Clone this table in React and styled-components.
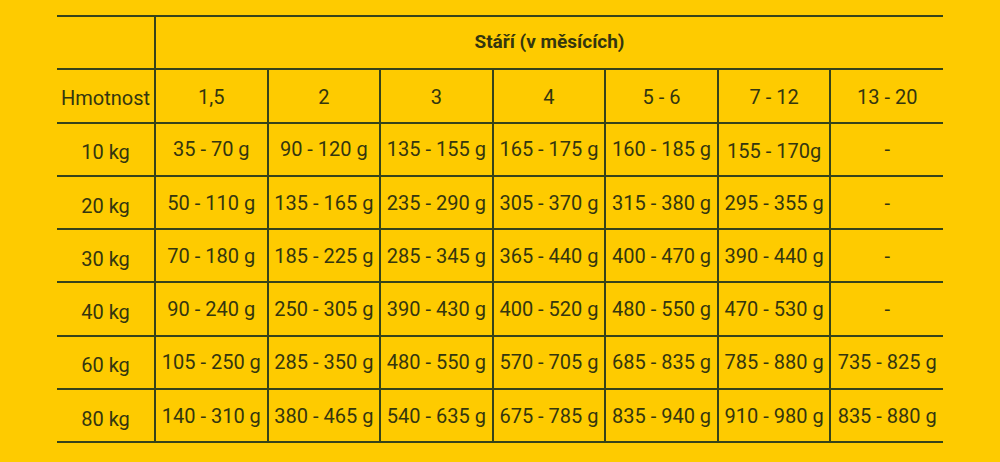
import React from "react";
import styled, { createGlobalStyle } from "styled-components";

const Global = createGlobalStyle`
  html, body { margin: 0; padding: 0; background: #fecb00; }
  body { font-family: Roboto, "Noto Sans", Arial, sans-serif; }
`;

const Page = styled.div`
  width: 1000px;
  height: 462px;
  background: #fecb00;
  padding: 15px 0 0 57px;
  box-sizing: border-box;
`;

const Table = styled.table`
  border-collapse: collapse;
  table-layout: fixed;
  width: 886px;
  color: #34360f;
  font-size: 20px;
`;

const Row = styled.tr`
  height: 53.3px;
`;

const Cell = styled.td`
  border-top: 2px solid #36431a;
  border-bottom: 2px solid #36431a;
  border-left: ${(p) => (p.$first ? "none" : "2px solid #36431a")};
  border-right: none;
  padding: 0;
  text-align: center;
  vertical-align: middle;
  white-space: nowrap;
  overflow: visible;
  font-weight: ${(p) => (p.$bold ? 700 : 400)};
  font-size: ${(p) => (p.$bold ? "19px" : "inherit")};
`;

const Label = styled.span`
  display: inline-block;
  transform: translateY(${(p) => p.$dy || 0}px);
`;

const ages = ["1,5", "2", "3", "4", "5 - 6", "7 - 12", "13 - 20"];
const rows = [
  ["10 kg", "35 - 70 g", "90 - 120 g", "135 - 155 g", "165 - 175 g", "160 - 185 g", "155 - 170g", "-"],
  ["20 kg", "50 - 110 g", "135 - 165 g", "235 - 290 g", "305 - 370 g", "315 - 380 g", "295 - 355 g", "-"],
  ["30 kg", "70 - 180 g", "185 - 225 g", "285 - 345 g", "365 - 440 g", "400 - 470 g", "390 - 440 g", "-"],
  ["40 kg", "90 - 240 g", "250 - 305 g", "390 - 430 g", "400 - 520 g", "480 - 550 g", "470 - 530 g", "-"],
  ["60 kg", "105 - 250 g", "285 - 350 g", "480 - 550 g", "570 - 705 g", "685 - 835 g", "785 - 880 g", "735 - 825 g"],
  ["80 kg", "140 - 310 g", "380 - 465 g", "540 - 635 g", "675 - 785 g", "835 - 940 g", "910 - 980 g", "835 - 880 g"],
];

export default function App() {
  return (
    <Page>
      <Global />
      <Table>
        <colgroup>
          <col style={{ width: 98 }} />
          {ages.map((a) => (
            <col key={a} />
          ))}
        </colgroup>
        <tbody>
          <Row>
            <Cell $first />
            <Cell colSpan={7} $bold>
              <Label $dy={-1}>Stáří (v měsících)</Label>
            </Cell>
          </Row>
          <Row>
            <Cell $first>
              <Label $dy={2}>Hmotnost</Label>
            </Cell>
            {ages.map((a) => (
              <Cell key={a}>
                <Label $dy={1}>{a}</Label>
              </Cell>
            ))}
          </Row>
          {rows.map((r) => (
            <Row key={r[0]}>
              {r.map((v, i) => (
                <Cell key={i} $first={i === 0}>
                  <Label $dy={i === 0 ? 3 : v === "155 - 170g" ? 2 : 0}>{v}</Label>
                </Cell>
              ))}
            </Row>
          ))}
        </tbody>
      </Table>
    </Page>
  );
}
